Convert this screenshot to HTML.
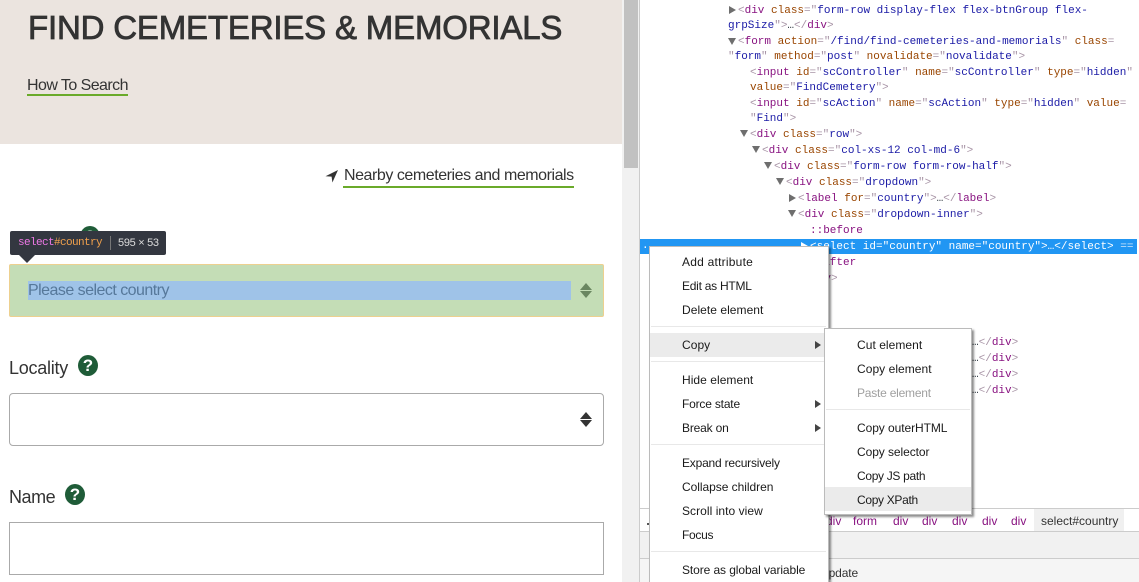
<!DOCTYPE html>
<html><head><meta charset="utf-8">
<style>
html,body{margin:0;padding:0;width:1139px;height:582px;overflow:hidden;background:#fff}
.a{position:absolute}
#r{position:relative;width:1139px;height:582px;overflow:hidden;font-family:"Liberation Sans",sans-serif}
.l{position:absolute;margin-top:1px;font:11px/16px "Liberation Mono",monospace;white-space:pre;color:#a894a6;height:16px}
.t{color:#881280}.n{color:#994500}.v{color:#1a1aa6}.k{color:#303942}
.tri{position:absolute;width:0;height:0}
.d{border-left:4px solid transparent;border-right:4px solid transparent;border-top:7px solid #6e6e6e}
.ri{border-top:4px solid transparent;border-bottom:4px solid transparent;border-left:7px solid #6e6e6e}
.m{position:absolute;background:#fff;border:1px solid #bbb;box-shadow:2px 2px 2px rgba(0,0,0,.45);box-sizing:border-box}
.i{position:absolute;margin-top:1px;font:12px/24px "Liberation Sans",sans-serif;color:#1a1a1a;white-space:pre;height:24px;letter-spacing:.05px}
.sep{position:absolute;height:1px;background:#e8e8e8}
.sub{position:absolute;width:0;height:0;border-top:4px solid transparent;border-bottom:4px solid transparent;border-left:6px solid #444}
.lab{position:absolute;font:18px/24px "Liberation Sans",sans-serif;color:#333;white-space:pre}
.q{position:absolute;width:20px;height:21px;border-radius:50%;background:#1f5c38;color:#fff;font:bold 17px/21px "Liberation Sans",sans-serif;text-align:center}
.box{position:absolute;left:9px;width:595px;height:53px;box-sizing:border-box;border:1px solid #aaa;background:#fff}
.up{position:absolute;width:0;height:0;border-left:6px solid transparent;border-right:6px solid transparent;border-bottom:7px solid #333}
.dn{position:absolute;width:0;height:0;border-left:6px solid transparent;border-right:6px solid transparent;border-top:7px solid #333}
.crumb{position:absolute;top:513px;font:12px/16px "Liberation Sans",sans-serif;color:#881280}
</style></head><body><div id="r">

<!-- left page -->
<div class="a" style="left:0;top:0;width:622px;height:144px;background:#ebe4df"></div>
<div class="a" style="left:28px;top:8px;font:33px/40px 'Liberation Sans',sans-serif;color:#333;white-space:pre;-webkit-text-stroke:.8px #333;letter-spacing:-.18px">FIND CEMETERIES &amp; MEMORIALS</div>
<div class="a" style="left:27px;top:76px;font:16px/20px 'Liberation Sans',sans-serif;color:#333;white-space:pre;letter-spacing:-.56px">How To Search</div>
<div class="a" style="left:27px;top:94px;width:101px;height:2px;background:#6aaa2a"></div>

<svg class="a" style="left:325px;top:169px" width="14" height="14" viewBox="0 0 14 14"><path d="M13 1 L0.5 7.2 L6.6 7.6 L7.4 13.5 Z" fill="#333"/></svg>
<div class="a" style="left:344px;top:166px;font:16px/20px 'Liberation Sans',sans-serif;color:#333;white-space:pre;letter-spacing:-.45px">Nearby cemeteries and memorials</div>
<div class="a" style="left:343px;top:186px;width:231px;height:2px;background:#6aaa2a"></div>

<div class="q" style="left:80px;top:226px">?</div>

<!-- highlighted select -->
<div class="a" style="left:9px;top:264px;width:595px;height:53px;box-sizing:border-box;background:#c4ddb6;border:1px solid #edd08f;border-radius:2px"></div>
<div class="a" style="left:28px;top:281px;width:543px;height:19px;background:#9fc3e8"></div>
<div class="a" style="left:28px;top:281px;font:16px/19px 'Liberation Sans',sans-serif;color:#56789a;white-space:pre;letter-spacing:-.53px">Please select country</div>
<div class="up" style="left:580px;top:283px;border-bottom-color:#6a8660"></div>
<div class="dn" style="left:580px;top:291px;border-top-color:#6a8660"></div>

<!-- tooltip -->
<div class="a" style="left:10px;top:231px;width:156px;height:24px;background:#333740;border-radius:2px"></div>
<div class="a" style="left:19px;top:255px;width:0;height:0;border-left:8px solid transparent;border-right:8px solid transparent;border-top:8px solid #333740"></div>
<div class="a" style="left:18px;top:235px;font:11px/16px 'Liberation Mono',monospace;white-space:pre;color:#ee78e6;letter-spacing:-.6px">select<span style="color:#f0a04c">#country</span></div>
<div class="a" style="left:110px;top:236px;width:1px;height:14px;background:#777"></div>
<div class="a" style="left:118px;top:235px;font:11px/16px 'Liberation Sans',sans-serif;white-space:pre;color:#ddd;letter-spacing:-.3px">595 × 53</div>

<!-- locality -->
<div class="lab" style="left:9px;top:356px;letter-spacing:-.25px">Locality</div>
<div class="q" style="left:78px;top:355px">?</div>
<div class="box" style="top:393px;border-radius:4px"></div>
<div class="up" style="left:580px;top:412px"></div>
<div class="dn" style="left:580px;top:420px"></div>

<!-- name -->
<div class="lab" style="left:9px;top:485px;letter-spacing:-.45px">Name</div>
<div class="q" style="left:65px;top:484px">?</div>
<div class="box" style="top:522px"></div>

<!-- page scrollbar -->
<div class="a" style="left:622px;top:0;width:18px;height:582px;background:#f1f1f1"></div>
<div class="a" style="left:624px;top:0;width:14px;height:168px;background:#c1c1c1"></div>

<!-- devtools -->
<div class="a" style="left:639px;top:0;width:1px;height:582px;background:#ccc"></div>

<div class="tri ri" style="left:729px;top:6px"></div>
<div class="l" style="left:738px;top:2px">&lt;<span class="t">div</span> <span class="n">class</span>="<span class="v">form-row display-flex flex-btnGroup flex-</span></div>
<div class="l" style="left:728px;top:17px"><span class="v">grpSize</span>"&gt;<span class="k">…</span>&lt;/<span class="t">div</span>&gt;</div>
<div class="tri d" style="left:728px;top:38px"></div>
<div class="l" style="left:738px;top:33px">&lt;<span class="t">form</span> <span class="n">action</span>="<span class="v">/find/find-cemeteries-and-memorials</span>" <span class="n">class</span>=</div>
<div class="l" style="left:728px;top:48px">"<span class="v">form</span>" <span class="n">method</span>="<span class="v">post</span>" <span class="n">novalidate</span>="<span class="v">novalidate</span>"&gt;</div>
<div class="l" style="left:750px;top:64px">&lt;<span class="t">input</span> <span class="n">id</span>="<span class="v">scController</span>" <span class="n">name</span>="<span class="v">scController</span>" <span class="n">type</span>="<span class="v">hidden</span>"</div>
<div class="l" style="left:750px;top:79px"><span class="n">value</span>="<span class="v">FindCemetery</span>"&gt;</div>
<div class="l" style="left:750px;top:95px">&lt;<span class="t">input</span> <span class="n">id</span>="<span class="v">scAction</span>" <span class="n">name</span>="<span class="v">scAction</span>" <span class="n">type</span>="<span class="v">hidden</span>" <span class="n">value</span>=</div>
<div class="l" style="left:750px;top:110px">"<span class="v">Find</span>"&gt;</div>
<div class="tri d" style="left:740px;top:130px"></div>
<div class="l" style="left:750px;top:126px">&lt;<span class="t">div</span> <span class="n">class</span>="<span class="v">row</span>"&gt;</div>
<div class="tri d" style="left:752px;top:146px"></div>
<div class="l" style="left:762px;top:142px">&lt;<span class="t">div</span> <span class="n">class</span>="<span class="v">col-xs-12 col-md-6</span>"&gt;</div>
<div class="tri d" style="left:764px;top:162px"></div>
<div class="l" style="left:774px;top:158px">&lt;<span class="t">div</span> <span class="n">class</span>="<span class="v">form-row form-row-half</span>"&gt;</div>
<div class="tri d" style="left:776px;top:178px"></div>
<div class="l" style="left:786px;top:174px">&lt;<span class="t">div</span> <span class="n">class</span>="<span class="v">dropdown</span>"&gt;</div>
<div class="tri ri" style="left:789px;top:194px"></div>
<div class="l" style="left:798px;top:190px">&lt;<span class="t">label</span> <span class="n">for</span>="<span class="v">country</span>"&gt;<span class="k">…</span>&lt;/<span class="t">label</span>&gt;</div>
<div class="tri d" style="left:788px;top:210px"></div>
<div class="l" style="left:798px;top:206px">&lt;<span class="t">div</span> <span class="n">class</span>="<span class="v">dropdown-inner</span>"&gt;</div>
<div class="l" style="left:810px;top:222px;color:#881280">::before</div>

<div class="a" style="left:640px;top:239px;width:497px;height:15px;background:#2196f3"></div>
<div class="a" style="left:642px;top:238px;font:11px/16px 'Liberation Mono',monospace;color:#fff">..</div>
<div class="tri ri" style="left:801px;top:242px;border-left-color:#fff"></div>
<div class="l" style="left:810px;top:238px;color:#fff">&lt;select id="country" name="country"&gt;…&lt;/select&gt; <span style="color:#cde6fb">==</span></div>
<div class="l" style="left:810px;top:254px;color:#881280">::after</div>
<div class="l" style="left:798px;top:270px">&lt;/<span class="t">div</span>&gt;</div>

<div class="l" style="left:972px;top:334px"><span class="k">…</span>&lt;/<span class="t">div</span>&gt;</div>
<div class="l" style="left:972px;top:350px"><span class="k">…</span>&lt;/<span class="t">div</span>&gt;</div>
<div class="l" style="left:972px;top:366px"><span class="k">…</span>&lt;/<span class="t">div</span>&gt;</div>
<div class="l" style="left:972px;top:382px"><span class="k">…</span>&lt;/<span class="t">div</span>&gt;</div>

<!-- bottom bars -->
<div class="a" style="left:640px;top:508px;width:499px;height:1px;background:#ccc"></div>
<div class="a" style="left:1034px;top:509px;width:90px;height:22px;background:#f0f0f0"></div>
<div class="a" style="left:640px;top:531px;width:499px;height:27px;background:#f1f1f1;border-top:1px solid #ccc;box-sizing:border-box"></div>
<div class="a" style="left:640px;top:558px;width:499px;height:1px;background:#ccc"></div>
<div class="a" style="left:640px;top:559px;width:499px;height:23px;background:#f5f5f5"></div>
<div class="a" style="left:647px;top:523px;width:2px;height:2px;background:#555"></div>
<div class="crumb" style="left:826px">div</div>
<div class="crumb" style="left:853px">form</div>
<div class="crumb" style="left:893px">div</div>
<div class="crumb" style="left:922px">div</div>
<div class="crumb" style="left:952px">div</div>
<div class="crumb" style="left:982px">div</div>
<div class="crumb" style="left:1011px">div</div>
<div class="crumb" style="left:1041px;color:#333">select#country</div>
<div class="a" style="left:822px;top:565px;font:12px/16px 'Liberation Sans',sans-serif;color:#333;letter-spacing:-.1px">update</div>

<!-- main context menu -->
<div class="m" style="left:649px;top:246px;width:180px;height:345px"></div>
<div class="i" style="left:682px;top:249px;letter-spacing:.23px">Add attribute</div>
<div class="i" style="left:682px;top:273px;letter-spacing:-.25px">Edit as HTML</div>
<div class="i" style="left:682px;top:297px">Delete element</div>
<div class="sep" style="left:651px;top:326px;width:175px"></div>
<div class="a" style="left:650px;top:333px;width:177px;height:24px;background:#ebebeb"></div>
<div class="i" style="left:682px;top:332px">Copy</div>
<div class="sub" style="left:815px;top:341px"></div>
<div class="sep" style="left:651px;top:361px;width:175px"></div>
<div class="i" style="left:682px;top:367px">Hide element</div>
<div class="i" style="left:682px;top:391px;letter-spacing:-.19px">Force state</div>
<div class="sub" style="left:815px;top:400px"></div>
<div class="i" style="left:682px;top:415px;letter-spacing:-.17px">Break on</div>
<div class="sub" style="left:815px;top:424px"></div>
<div class="sep" style="left:651px;top:444px;width:175px"></div>
<div class="i" style="left:682px;top:450px;letter-spacing:-.2px">Expand recursively</div>
<div class="i" style="left:682px;top:474px;letter-spacing:-.04px">Collapse children</div>
<div class="i" style="left:682px;top:498px">Scroll into view</div>
<div class="i" style="left:682px;top:522px;letter-spacing:-.3px">Focus</div>
<div class="sep" style="left:651px;top:551px;width:175px"></div>
<div class="i" style="left:682px;top:557px;letter-spacing:-.09px">Store as global variable</div>

<!-- submenu -->
<div class="m" style="left:824px;top:328px;width:148px;height:187px"></div>
<div class="i" style="left:857px;top:332px">Cut element</div>
<div class="i" style="left:857px;top:356px">Copy element</div>
<div class="i" style="left:857px;top:380px;color:#a0a0a0;letter-spacing:-.22px">Paste element</div>
<div class="sep" style="left:826px;top:409px;width:144px"></div>
<div class="i" style="left:857px;top:415px;letter-spacing:-.07px">Copy outerHTML</div>
<div class="i" style="left:857px;top:439px;letter-spacing:-.07px">Copy selector</div>
<div class="i" style="left:857px;top:463px;letter-spacing:-.32px">Copy JS path</div>
<div class="a" style="left:825px;top:487px;width:146px;height:24px;background:#ebebeb"></div>
<div class="i" style="left:857px;top:487px;letter-spacing:-.32px">Copy XPath</div>

</div></body></html>
